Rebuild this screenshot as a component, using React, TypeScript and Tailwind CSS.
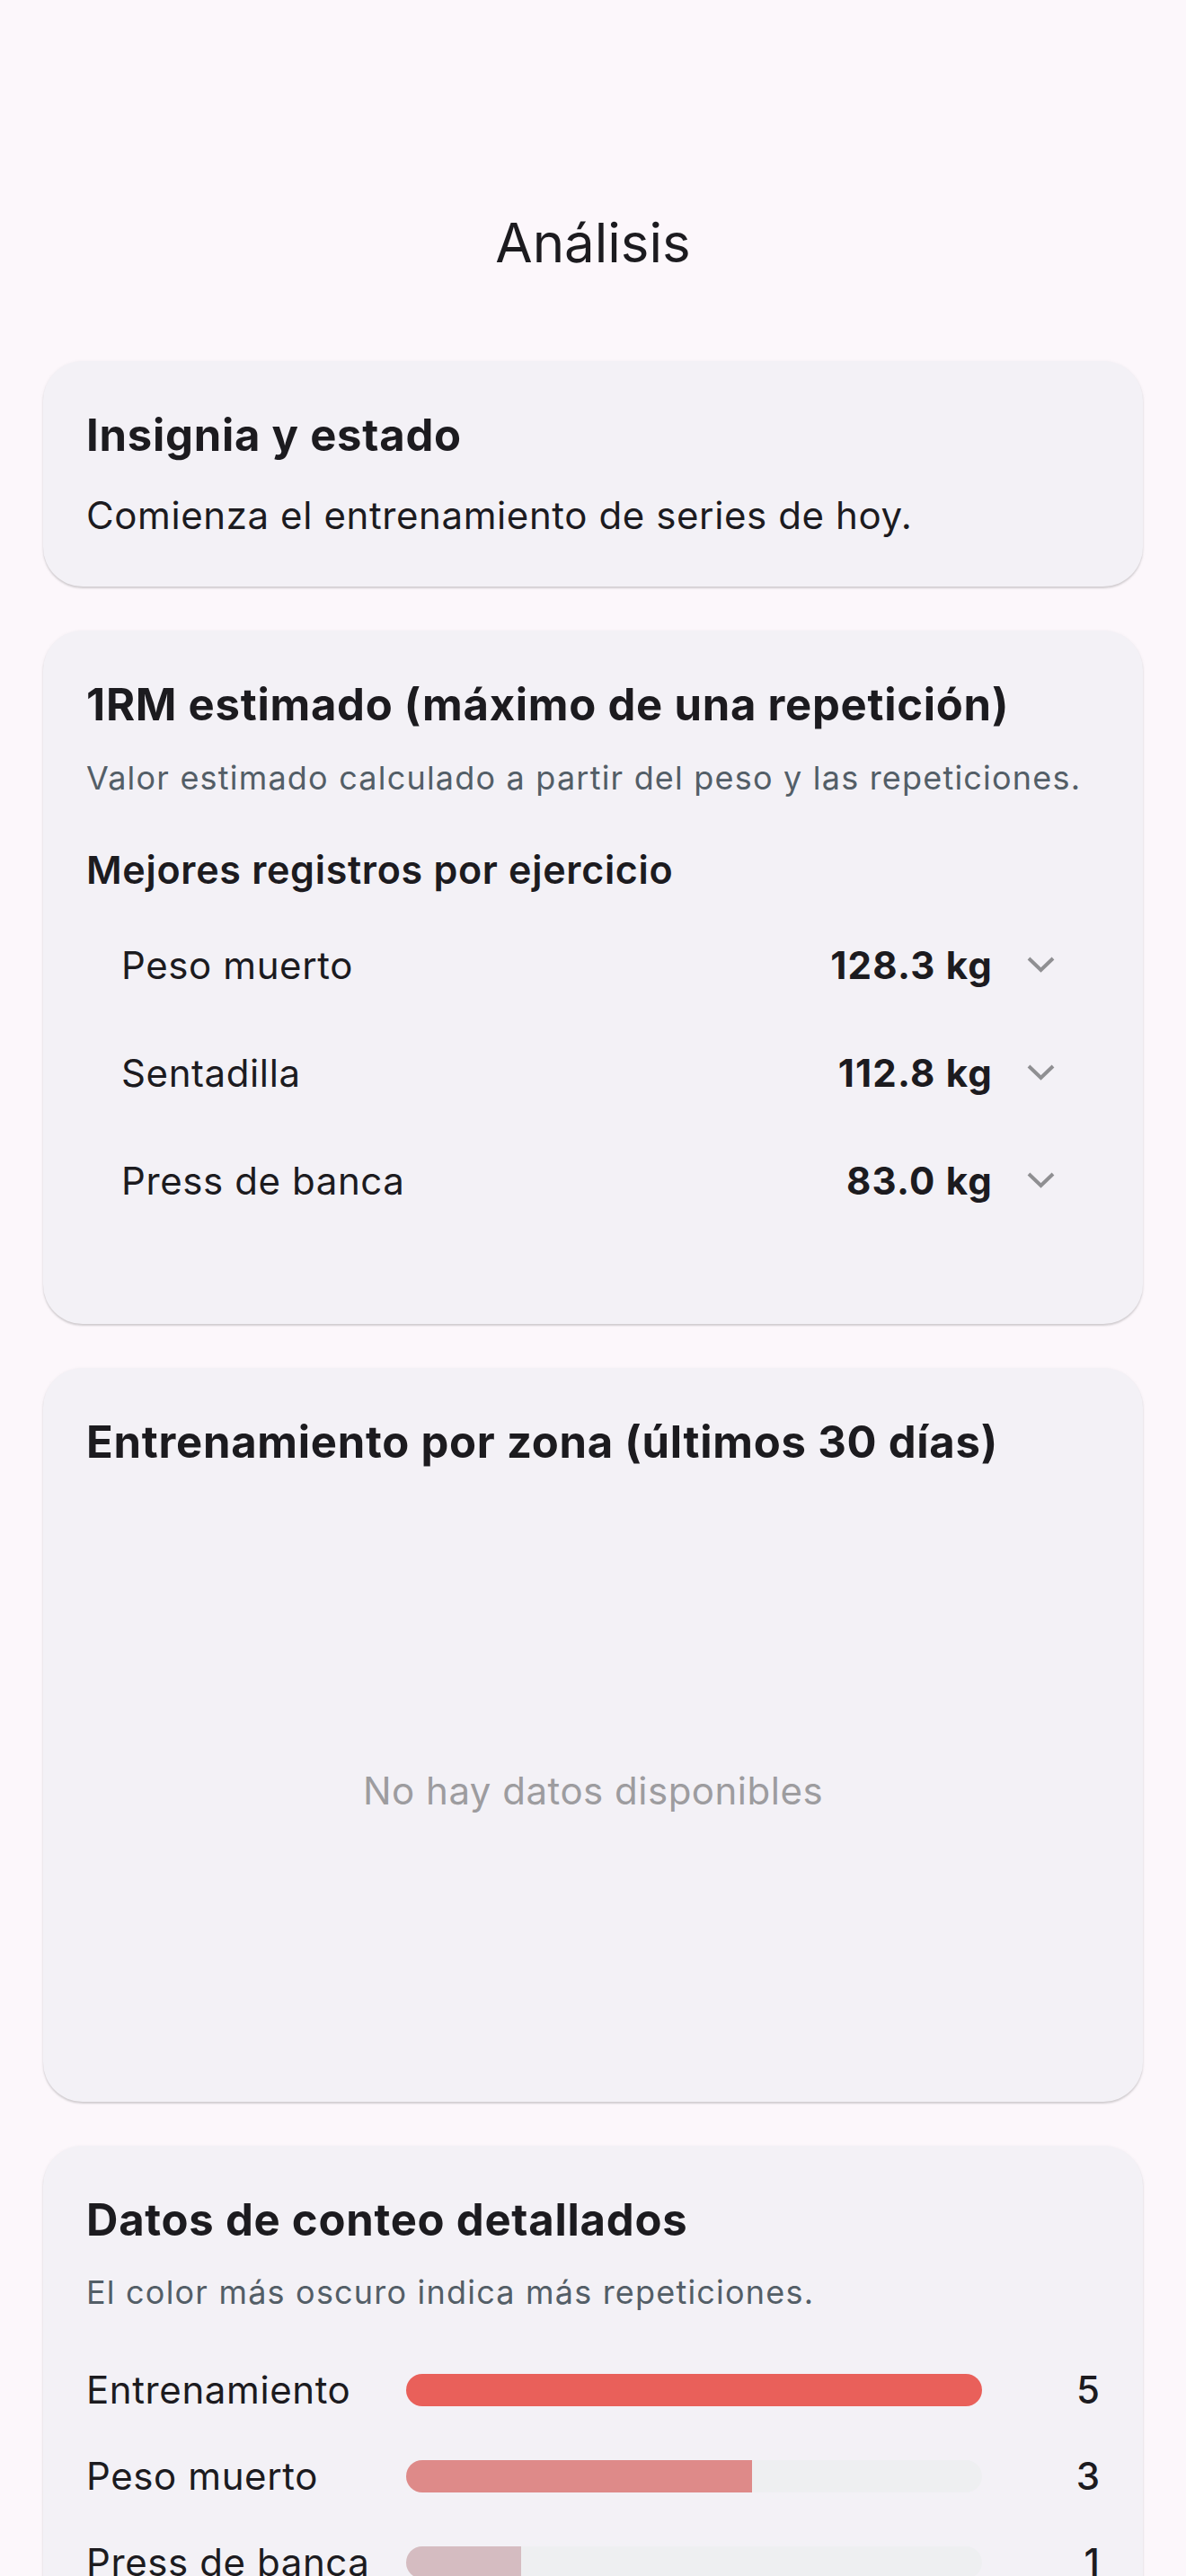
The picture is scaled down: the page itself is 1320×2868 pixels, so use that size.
import React from 'react';

const records = [
    { name: 'Peso muerto', value: '128.3 kg' },
    { name: 'Sentadilla', value: '112.8 kg' },
    { name: 'Press de banca', value: '83.0 kg' },
];

const counts = [
    { name: 'Entrenamiento', count: 5, color: '#e9605a' },
    { name: 'Peso muerto', count: 3, color: '#de8a89' },
    { name: 'Press de banca', count: 1, color: '#d5bcc1' },
];

const Chevron = () => (
    <svg width="31" height="18" viewBox="0 0 31 18" fill="none">
        <polyline points="2,2 15.5,15 29,2" stroke="#8f8f92" strokeWidth="4" strokeLinecap="butt" strokeLinejoin="miter" />
    </svg>
);

const Card = ({ children, className = '' }: { children: React.ReactNode; className?: string }) => (
    <div
        className={`bg-[#f3f1f6] rounded-[44px] px-[48px] pt-[53px] shadow-[0_2px_2px_rgba(0,0,0,0.14),0_1px_4px_rgba(0,0,0,0.06)] ${className}`}
    >
        {children}
    </div>
);

const CardTitle = ({ children }: { children: React.ReactNode }) => (
    <h2 className="text-[49px] leading-[60px] font-bold text-[#1c1b1f] tracking-[0.75px]">{children}</h2>
);

const App = () => {
    const max = 5;
    return (
        <div
            className="min-h-[2868px] bg-[#fcf7fb] text-[#1c1b1f]"
            style={{ fontFamily: 'Inter, "Noto Sans", sans-serif' }}
        >
            <header className="pt-[234px] flex justify-center">
                <h1 className="text-[60px] leading-[72px] font-normal">Análisis</h1>
            </header>

            <main className="mt-[96px] px-[48px] flex flex-col gap-[49px] pb-[200px]">
                <Card className="pb-[54px]">
                    <CardTitle>Insignia y estado</CardTitle>
                    <p className="mt-[34px] text-[42px] leading-[50px] tracking-[0.6px]">
                        Comienza el entrenamiento de series de hoy.
                    </p>
                </Card>

                <Card className="pb-[99px]">
                    <CardTitle>1RM estimado (máximo de una repetición)</CardTitle>
                    <p className="mt-[29px] text-[36px] leading-[44px] text-[#535e67] tracking-[1.2px]">
                        Valor estimado calculado a partir del peso y las repeticiones.
                    </p>
                    <h3 className="mt-[55px] text-[43px] leading-[50px] font-semibold tracking-[0.7px]">
                        Mejores registros por ejercicio
                    </h3>
                    <div className="mt-[22px] flex flex-col">
                        {records.map((r) => (
                            <div key={r.name} className="h-[120px] flex items-center pl-[39px] pr-[50px]">
                                <span className="flex-1 text-[42px] leading-[50px] tracking-[0.6px]">{r.name}</span>
                                <span className="text-[42px] leading-[50px] font-bold tracking-[1.2px]">{r.value}</span>
                                <span className="ml-[38px] flex items-center -mt-[2px]">
                                    <Chevron />
                                </span>
                            </div>
                        ))}
                    </div>
                </Card>

                <Card className="pb-[54px]">
                    <CardTitle>Entrenamiento por zona (últimos 30 días)</CardTitle>
                    <div className="mt-[66px] h-[584px] flex items-center justify-center">
                        <span className="text-[42px] leading-[50px] text-[#9d9c9f] tracking-[0.5px]">
                            No hay datos disponibles
                        </span>
                    </div>
                </Card>

                <Card className="pb-[54px]">
                    <CardTitle>Datos de conteo detallados</CardTitle>
                    <p className="mt-[28px] text-[36px] leading-[44px] text-[#535e67] tracking-[1.2px]">
                        El color más oscuro indica más repeticiones.
                    </p>
                    <div className="mt-[62px] flex flex-col gap-[46px]">
                        {counts.map((c) => (
                            <div key={c.name} className="flex items-center h-[50px]">
                                <span className="w-[356px] text-[42px] leading-[50px] tracking-[0.6px]">{c.name}</span>
                                <div className="flex-1 h-[36px] rounded-full bg-[#eeeff1] overflow-hidden">
                                    <div className="h-full" style={{ width: `${(c.count / max) * 100}%`, backgroundColor: c.color }} />
                                </div>
                                <span className="w-[131px] text-right text-[42px] leading-[50px] font-medium">{c.count}</span>
                            </div>
                        ))}
                    </div>
                </Card>
            </main>
        </div>
    );
};

export default App;
